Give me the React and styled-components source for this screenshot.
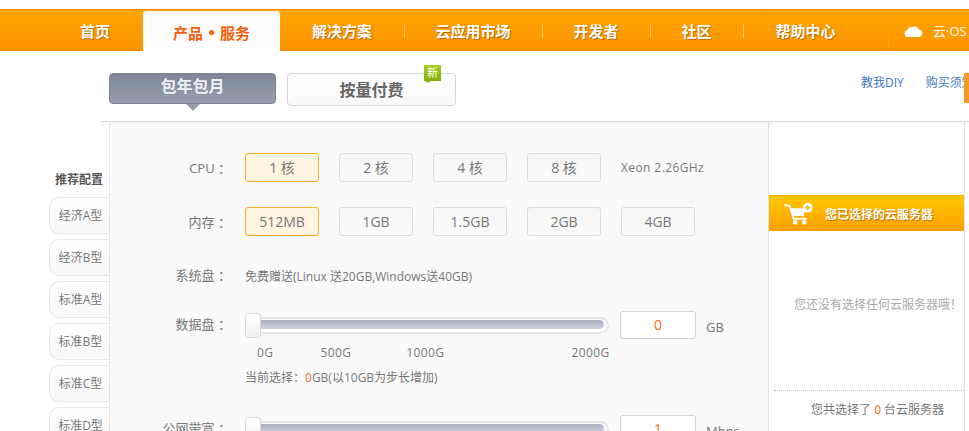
import React from "react";
import styled, { createGlobalStyle } from "styled-components";

const GlobalStyle = createGlobalStyle`
  html, body {
    margin: 0;
    padding: 0;
    background: #fff;
    overflow: hidden;
  }
  body {
    font-family: "Open Sans", "Noto Sans CJK SC", "Noto Sans", sans-serif;
    color: #666;
  }
`;

const Page = styled.div`
  position: relative;
  width: 969px;
  height: 431px;
  overflow: hidden;
  padding-top: 9px;
  box-sizing: border-box;
`;

const Nav = styled.div`
  display: flex;
  align-items: flex-end;
  height: 42px;
  box-sizing: border-box;
  padding-left: 47px;
  background: linear-gradient(#ffa400, #ff9500);
  border-top: 1px solid #f98a05;
  border-bottom: 1px solid #f98a05;
  box-shadow: 0 1px 2px rgba(0, 0, 0, 0.15);
`;

const NavItem = styled.div`
  width: ${(p) => p.$w}px;
  height: 40px;
  box-sizing: border-box;
  padding-right: ${(p) => p.$pr || 0}px;
  display: flex;
  align-items: center;
  justify-content: center;
  color: #fff;
  font-size: 15px;
  font-weight: 700;
  text-shadow: 1px 1px 1px rgba(120, 60, 0, 0.55);
  position: relative;
  ${(p) =>
    p.$sep &&
    `&::after {
      content: "";
      position: absolute;
      right: -1px;
      top: 14px;
      height: 14px;
      width: 1px;
      background: #ffc766;
    }`}
`;

const ActiveTab = styled.div`
  width: 137px;
  height: 40px;
  margin-bottom: -1px;
  margin-top: 3px;
  box-sizing: border-box;
  padding-top: 3px;
  display: flex;
  align-items: center;
  justify-content: center;
  background: linear-gradient(#f9f9f9, #fff);
  border-radius: 3px 3px 0 0;
  color: #f85f0b;
  font-size: 15px;
  font-weight: 700;
  z-index: 1;
`;

const TabDot = styled.span`
  width: 5px;
  height: 5px;
  margin: 0 6px;
  border-radius: 50%;
  background: #f85f0b;
`;

const CloudItem = styled.div`
  flex: 1;
  height: 40px;
  display: flex;
  align-items: center;
  gap: 10px;
  padding-left: 15px;
  border-left: 1px solid #f9a11d;
  color: #fff;
  font-size: 13px;
  white-space: nowrap;
  overflow: hidden;
`;

const TabBar = styled.div`
  height: 71px;
  box-sizing: border-box;
  padding: 22px 0 0 109px;
  display: flex;
  align-items: flex-start;
  background: #fff;
  position: relative;
  z-index: 1;
  &::after {
    content: "";
    position: absolute;
    left: 100px;
    right: 0;
    bottom: 0;
    height: 1px;
    background: #ddd;
    box-shadow: 0 1px 4px rgba(0, 0, 0, 0.12);
  }
`;

const PlanOn = styled.div`
  width: 167px;
  height: 31px;
  box-sizing: border-box;
  padding-top: 1px;
  text-align: center;
  line-height: 22px;
  font-size: 16px;
  font-weight: 700;
  color: #eef0f4;
  background: linear-gradient(#7d8799, #979eaf);
  border: 1px solid #7b8496;
  border-radius: 4px;
  position: relative;
  &::after {
    content: "";
    position: absolute;
    left: 76px;
    bottom: -8px;
    border-left: 7px solid transparent;
    border-right: 7px solid transparent;
    border-top: 7px solid #979eaf;
  }
`;

const PlanOff = styled.div`
  width: 169px;
  height: 33px;
  margin-left: 11px;
  box-sizing: border-box;
  text-align: center;
  line-height: 33px;
  font-size: 16px;
  font-weight: 700;
  color: #666;
  background: linear-gradient(#fff, #f8f8f8);
  border: 1px solid #d6d6d6;
  border-radius: 4px;
  position: relative;
`;

const NewBadge = styled.span`
  position: absolute;
  left: 136px;
  top: -9px;
  width: 17px;
  height: 16px;
  background: linear-gradient(#a5cf1c, #7faf0a);
  color: #fff;
  font-size: 11px;
  font-weight: 400;
  line-height: 16px;
  text-align: center;
  &::after {
    content: "";
    position: absolute;
    left: 1px;
    bottom: -2px;
    border-left: 3px solid transparent;
    border-right: 3px solid transparent;
    border-top: 2px solid #8fba12;
  }
`;

const Links = styled.div`
  margin-left: auto;
  width: 108px;
  display: flex;
  align-items: center;
  gap: 11px;
  margin-top: 2px;
  font-size: 12px;
  line-height: 16px;
  color: #3a78c3;
  white-space: nowrap;
`;

const LinkSep = styled.span`
  width: 1px;
  height: 12px;
  background: #ddd;
`;

const SideFlag = styled.div`
  position: absolute;
  left: 964px;
  top: 73px;
  width: 5px;
  height: 30px;
  background: #f59a23;
  z-index: 2;
`;

const Main = styled.div`
  display: grid;
  grid-template-columns: 109px 660px 196px 4px;
  height: 309px;
`;

const Presets = styled.div`
  padding: 50px 0 0 49px;
  display: flex;
  flex-direction: column;
  gap: 5px;
`;

const PresetTitle = styled.div`
  font-size: 12px;
  font-weight: 700;
  line-height: 16px;
  margin: 0 0 4px 6px;
  color: #555;
`;

const Preset = styled.div`
  height: 37px;
  flex-shrink: 0;
  box-sizing: border-box;
  border: 1px solid #e8e8e8;
  border-right: none;
  border-radius: 10px 0 0 10px;
  background: linear-gradient(#fff, #f8f8f8);
  font-size: 12px;
  line-height: 35px;
  text-align: center;
  padding-left: 2px;
  color: #777;
  white-space: nowrap;
`;

const Panel = styled.div`
  background: #fafafa;
  border-left: 1px solid #e4e4e4;
  border-right: 1px solid #e4e4e4;
  padding-top: 31px;
`;

const Row = styled.div`
  display: flex;
  align-items: center;
  height: ${(p) => p.$h || 29}px;
  margin-bottom: ${(p) => p.$mb || 0}px;
`;

const Label = styled.div`
  width: 121px;
  flex-shrink: 0;
  margin-right: 14px;
  padding-bottom: ${(p) => p.$pb || 0}px;
  text-align: right;
  font-size: 13px;
  color: #777;
  white-space: nowrap;
`;

const Options = styled.div`
  display: flex;
  gap: 20px;
  align-items: center;
`;

const Option = styled.div`
  width: 74px;
  height: 29px;
  box-sizing: border-box;
  border: 1px solid ${(p) => (p.$on ? "#fbac2d" : "#ddd")};
  border-radius: 3px;
  background: ${(p) => (p.$on ? "#fff4e0" : "linear-gradient(#f6f6f6, #fbfbfb)")};
  font-size: 14px;
  line-height: 27px;
  text-align: center;
  color: #777;
  white-space: nowrap;
`;

const Note = styled.div`
  font-size: 12px;
  color: #777;
  white-space: nowrap;
  letter-spacing: ${(p) => p.$ls || 0}px;
`;

const Slider = styled.div`
  position: relative;
  width: 364px;
  height: 17px;
  box-sizing: border-box;
  border: 2px solid #e6e6e6;
  border-radius: 9px;
  background: #fff;
  padding: 1px 3px 1px 14px;
`;

const SliderBar = styled.div`
  height: 9px;
  border-radius: 0 5px 5px 0;
  background: linear-gradient(#a8afbf, #cdd2dd);
`;

const Handle = styled.div`
  position: absolute;
  left: -2px;
  top: -6px;
  width: 16px;
  height: 25px;
  box-sizing: border-box;
  border: 1px solid #d8d8d8;
  border-radius: 3px;
  background: linear-gradient(#fff, #f0f0f0);
`;

const AmountBox = styled.div`
  width: 76px;
  height: 28px;
  margin-left: 11px;
  flex-shrink: 0;
  box-sizing: border-box;
  border: 1px solid #d4d4d4;
  border-radius: 3px;
  background: #fff;
  color: #ff6a0c;
  font-size: 14px;
  line-height: 26px;
  text-align: center;
`;

const Unit = styled.div`
  margin-left: 10px;
  padding-top: 3px;
  font-size: 13px;
  color: #777;
`;

const Ticks = styled.div`
  display: flex;
  padding-left: 147px;
  margin-top: 6px;
  font-size: 12px;
  line-height: 16px;
  color: #777;
  letter-spacing: 0.4px;
`;

const Tick = styled.span`
  margin-left: ${(p) => p.$ml || 0}px;
`;

const Hint = styled.div`
  padding-left: 135px;
  margin: 9px 0 29px;
  font-size: 12px;
  line-height: 16px;
  color: #777;
  white-space: nowrap;
`;

const Orange = styled.span`
  color: #ff6a0c;
`;

const Basket = styled.div`
  background: #fff;
  border-right: 1px solid #e4e4e4;
  padding-top: 73px;
  display: flex;
  flex-direction: column;
`;

const BasketHead = styled.div`
  height: 36px;
  flex-shrink: 0;
  box-sizing: border-box;
  display: flex;
  align-items: center;
  padding-left: 15px;
  gap: 12px;
  background: linear-gradient(#ffc800, #ffa000);
  border-top: 1px solid #ffa800;
  color: #fff;
  font-size: 12px;
  font-weight: 700;
  white-space: nowrap;
  text-shadow: 1px 1px 1px rgba(140, 70, 0, 0.6);
`;

const BasketEmpty = styled.div`
  height: 160px;
  flex-shrink: 0;
  box-sizing: border-box;
  padding: 66px 0 0 20px;
  border-bottom: 1px dotted #bbb;
  margin-left: 5px;
  font-size: 12px;
  line-height: 16px;
  color: #aaa;
  white-space: nowrap;
`;

const BasketTotal = styled.div`
  padding: 11px 0 0 42px;
  font-size: 12px;
  line-height: 16px;
  color: #777;
  white-space: nowrap;
`;

const CloudIcon = () => (
  <svg width="19" height="13" viewBox="0 0 19 13" fill="#fff">
    <path d="M4 13a3.6 3.6 0 0 1-.6-7.1A4.4 4.4 0 0 1 8 3 5 5 0 0 1 15 5.5 3.8 3.8 0 0 1 15.2 13Z" />
  </svg>
);

const CartIcon = () => (
  <svg width="29" height="24" viewBox="0 0 30 24" fill="none">
    <path d="M1 2.5 6 4l4 13h13" stroke="#fff" strokeWidth="2" strokeLinecap="round" strokeLinejoin="round" />
    <path d="M7 6h15l-1.5 8H9.4Z" fill="#fff" />
    <circle cx="11.5" cy="20.5" r="2.3" fill="#fff" />
    <circle cx="21" cy="20.5" r="2.3" fill="#fff" />
    <circle cx="24.5" cy="5.5" r="5" fill="#fff" />
    <path d="M24.5 2.8v5.4M21.8 5.5h5.4" stroke="#ffae00" strokeWidth="1.6" />
  </svg>
);

const presets = ["经济A型", "经济B型", "标准A型", "标准B型", "标准C型", "标准D型"];
const cpus = ["1 核", "2 核", "4 核", "8 核"];
const mems = ["512MB", "1GB", "1.5GB", "2GB", "4GB"];

export default function App() {
  return (
    <Page>
      <GlobalStyle />
      <Nav>
        <NavItem $w={96}>首页</NavItem>
        <ActiveTab>产品<TabDot />服务</ActiveTab>
        <NavItem $w={124} $sep>解决方案</NavItem>
        <NavItem $w={138} $sep>云应用市场</NavItem>
        <NavItem $w={108} $sep>开发者</NavItem>
        <NavItem $w={93} $sep>社区</NavItem>
        <NavItem $w={145} $pr={20}>帮助中心</NavItem>
        <CloudItem>
          <CloudIcon />
          云·OS
        </CloudItem>
      </Nav>
      <TabBar>
        <PlanOn>包年包月</PlanOn>
        <PlanOff>
          按量付费
          <NewBadge>新</NewBadge>
        </PlanOff>
        <Links>
          教我DIY
          <LinkSep />
          购买须知
        </Links>
      </TabBar>
      <SideFlag />
      <Main>
        <Presets>
          <PresetTitle>推荐配置</PresetTitle>
          {presets.map((p) => (
            <Preset key={p}>{p}</Preset>
          ))}
        </Presets>
        <Panel>
          <Row $mb={25}>
            <Label>CPU ：</Label>
            <Options>
              {cpus.map((c, i) => (
                <Option key={c} $on={i === 0}>{c}</Option>
              ))}
              <Note $ls={0.4}>Xeon 2.26GHz</Note>
            </Options>
          </Row>
          <Row $mb={25}>
            <Label>内存 ：</Label>
            <Options>
              {mems.map((m, i) => (
                <Option key={m} $on={i === 0}>{m}</Option>
              ))}
            </Options>
          </Row>
          <Row $mb={21}>
            <Label $pb={2}>系统盘 ：</Label>
            <Note>免费赠送(Linux 送20GB,Windows送40GB)</Note>
          </Row>
          <Row $h={28}>
            <Label $pb={4}>数据盘 ：</Label>
            <Slider>
              <SliderBar />
              <Handle />
            </Slider>
            <AmountBox>0</AmountBox>
            <Unit>GB</Unit>
          </Row>
          <Ticks>
            <Tick>0G</Tick>
            <Tick $ml={47}>500G</Tick>
            <Tick $ml={55}>1000G</Tick>
            <Tick $ml={127}>2000G</Tick>
          </Ticks>
          <Hint>
            当前选择：<Orange>0</Orange>GB(以10GB为步长增加)
          </Hint>
          <Row $h={28}>
            <Label $pb={4}>公网带宽 ：</Label>
            <Slider>
              <SliderBar />
              <Handle />
            </Slider>
            <AmountBox>1</AmountBox>
            <Unit>Mbps</Unit>
          </Row>
        </Panel>
        <Basket>
          <BasketHead>
            <CartIcon />
            您已选择的云服务器
          </BasketHead>
          <BasketEmpty>您还没有选择任何云服务器哦！</BasketEmpty>
          <BasketTotal>
            您共选择了 <Orange>0</Orange> 台云服务器
          </BasketTotal>
        </Basket>
        <div />
      </Main>
    </Page>
  );
}
